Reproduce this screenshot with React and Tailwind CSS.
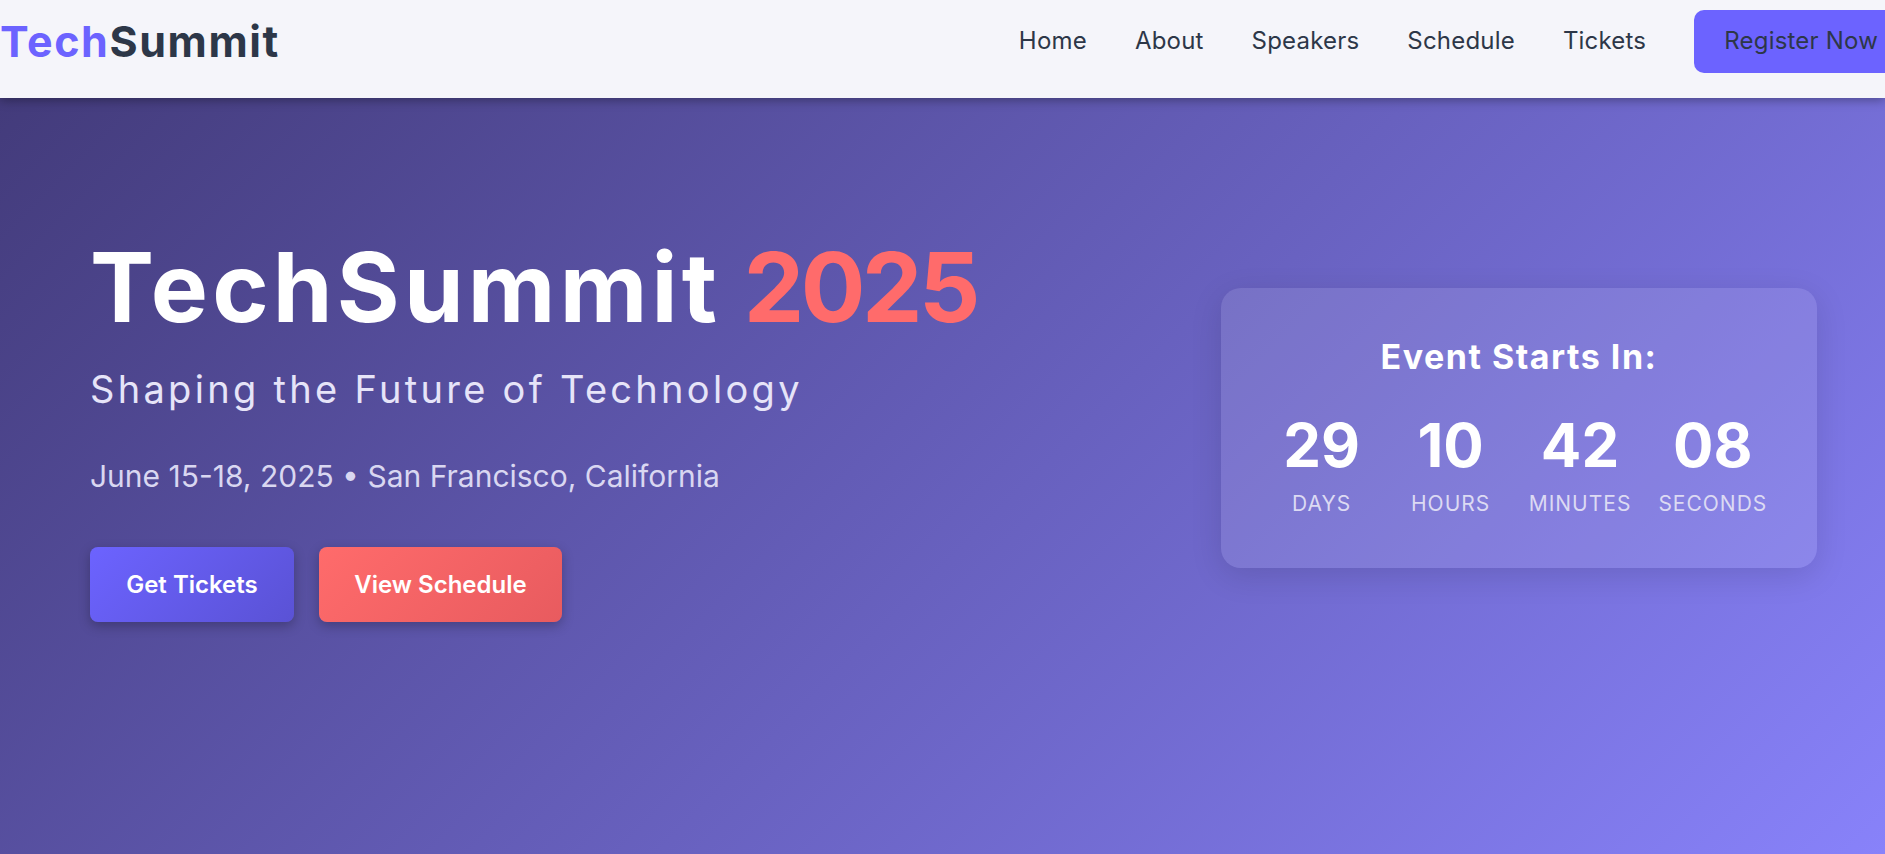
export default function App() {
  const font = { fontFamily: 'Inter, "Noto Sans", sans-serif' };
  const items = [
    ["29", "Days"],
    ["10", "Hours"],
    ["42", "Minutes"],
    ["08", "Seconds"],
  ];
  return (
    <div className="w-full h-[854px] overflow-hidden flex flex-col" style={font}>
      <header className="relative z-10 h-[98px] shrink-0 bg-[#f5f5fa] shadow-[0_2px_10px_rgba(0,0,0,0.35)] flex items-center pb-[16px]">
        <div className="text-[43px] font-bold tracking-[1.6px] leading-none">
          <span className="text-[#6c63ff]">Tech</span>
          <span className="text-[#2d3748]">Summit</span>
        </div>
        <nav className="ml-auto flex items-center gap-[48px] -mr-[23px]">
          {["Home", "About", "Speakers", "Schedule", "Tickets"].map((l) => (
            <a key={l} className="text-[24px] tracking-[0.2px] text-[#2d3748] leading-none">{l}</a>
          ))}
          <button className="h-[63px] px-[30px] rounded-[10px] bg-[#6c63ff] text-[24px] tracking-[0.2px] text-[#2d3748] leading-none">
            Register Now
          </button>
        </nav>
      </header>
      <section className="flex-1 bg-[linear-gradient(135deg,#433b7b_0%,#8882fa_100%)] pt-[136px] pl-[90px] pr-[68px]">
        <div className="flex items-center justify-between">
          <div className="flex flex-col">
            <h1 className="text-[96px] leading-[106px] font-bold text-white whitespace-nowrap">
              <span className="tracking-[4.2px]">TechSummit</span>{" "}
              <span className="text-[#ff6b6b] tracking-[-3.5px]">2025</span>
            </h1>
            <p className="mt-[27px] text-[38px] leading-[44px] text-[#e6e4f8] tracking-[3.3px] whitespace-nowrap">
              Shaping the Future of Technology
            </p>
            <p className="mt-[47px] text-[30px] leading-[36px] text-[#d9d7f1] whitespace-nowrap">
              June 15-18, 2025 • San Francisco, California
            </p>
            <div className="mt-[53px] flex gap-[25px]">
              <button className="w-[204px] h-[75px] rounded-[8px] bg-[linear-gradient(135deg,#6c63ff,#5a52d5)] text-white text-[24px] font-semibold shadow-[0_4px_12px_rgba(0,0,0,0.25)]">
                Get Tickets
              </button>
              <button className="w-[243px] h-[75px] rounded-[8px] bg-[linear-gradient(135deg,#ff6b6b,#e85b5f)] text-white text-[24px] font-semibold shadow-[0_4px_12px_rgba(0,0,0,0.25)]">
                View Schedule
              </button>
            </div>
          </div>
          <div className="w-[596px] h-[280px] rounded-[20px] bg-white/10 shadow-[0_8px_32px_rgba(0,0,0,0.12)] pt-[49px] flex flex-col items-center">
            <h2 className="text-[34px] leading-[40px] font-bold tracking-[1.5px] text-white">Event Starts In:</h2>
            <div className="mt-[32px] flex justify-center gap-[27px]">
              {items.map(([n, l]) => (
                <div key={l} className="min-w-[102px] flex flex-col items-center">
                  <span className="text-[60px] leading-[72px] font-bold text-white">{n}</span>
                  <span className="mt-[11px] text-[21px] leading-[24px] uppercase tracking-[1px] text-[#dcdaf3]">{l}</span>
                </div>
              ))}
            </div>
          </div>
        </div>
      </section>
    </div>
  );
}
